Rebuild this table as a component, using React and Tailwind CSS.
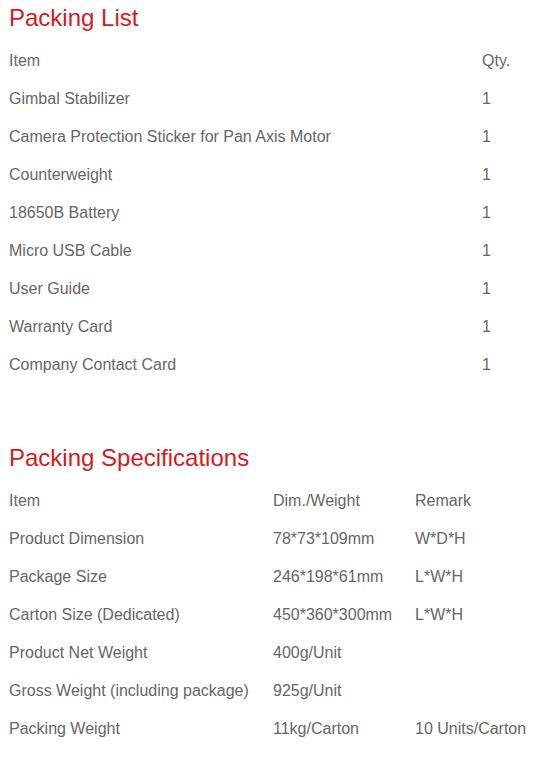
const packingList = [
  ['Gimbal Stabilizer', '1'],
  ['Camera Protection Sticker for Pan Axis Motor', '1'],
  ['Counterweight', '1'],
  ['18650B Battery', '1'],
  ['Micro USB Cable', '1'],
  ['User Guide', '1'],
  ['Warranty Card', '1'],
  ['Company Contact Card', '1'],
];

const specs = [
  ['Product Dimension', '78*73*109mm', 'W*D*H'],
  ['Package Size', '246*198*61mm', 'L*W*H'],
  ['Carton Size (Dedicated)', '450*360*300mm', 'L*W*H'],
  ['Product Net Weight', '400g/Unit', ''],
  ['Gross Weight (including package)', '925g/Unit', ''],
  ['Packing Weight', '11kg/Carton', '10 Units/Carton'],
];

const App = () => {
  return (
    <div className="w-[540px] min-h-[757px] bg-white pl-[9px] text-[16px] text-[#666666] font-['Liberation_Sans',Arial,sans-serif]">
      {/* Packing List */}
      <h2 className="h-[36px] leading-[36px] text-[24px] text-[#d6191c]">Packing List</h2>
      <div className="mt-[6px]">
        <div className="flex h-[38px] items-center">
          <span className="w-[473px]">Item</span>
          <span>Qty.</span>
        </div>
        {packingList.map(([name, qty]) => (
          <div key={name} className="flex h-[38px] items-center">
            <span className="w-[473px]">{name}</span>
            <span>{qty}</span>
          </div>
        ))}
      </div>

      {/* Packing Specifications */}
      <h2 className="mt-[56px] h-[36px] leading-[36px] text-[24px] text-[#d6191c]">Packing Specifications</h2>
      <div className="mt-[6px]">
        <div className="flex h-[38px] items-center">
          <span className="w-[264px]">Item</span>
          <span className="w-[142px]">Dim./Weight</span>
          <span>Remark</span>
        </div>
        {specs.map(([name, dim, remark]) => (
          <div key={name} className="flex h-[38px] items-center">
            <span className="w-[264px]">{name}</span>
            <span className="w-[142px]">{dim}</span>
            <span>{remark}</span>
          </div>
        ))}
      </div>
    </div>
  );
};

export default App;
